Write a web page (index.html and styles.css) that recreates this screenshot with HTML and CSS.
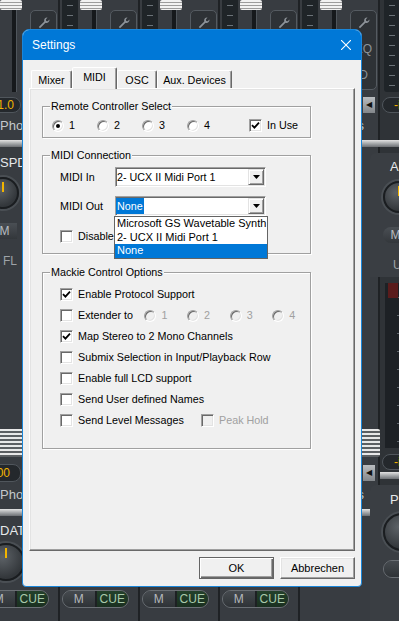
FILE: index.html
```html
<!DOCTYPE html>
<html lang="de">
<head>
    <meta charset="UTF-8">
    <meta name="viewport" content="width=device-width, initial-scale=1.0">
    <title>Settings</title>
    <link rel="stylesheet" href="styles.css">
</head>
<body>
    <div class="mixer">
        <div class="strip">
            <div class="s-top">
                <div class="meter"></div>
                <div class="fader"><div class="cap"></div></div>
                <div class="tool">
                    <svg class="wrench" width="14" height="14" viewBox="0 0 14 14"><path d="M10.5 1.5a3 3 0 0 0-3.2 4L1.8 11l1.2 1.2 5.5-5.5a3 3 0 0 0 4-3.2l-1.8 1.8-1.5-.4-.4-1.5z"/></svg>
                    <span>EQ</span><span>D</span>
                </div>
            </div>
            <div class="v-row"><div class="value">1.0</div><div class="arrow-btn">&#9664;</div></div>
            <div class="name">Phones</div>
            <div class="bar"></div>
            <div class="src">SPD</div>
            <div class="knob"></div>
            <div class="mbtn">M</div>
            <div class="ch">FL</div>
            <div class="lower"><div class="cap low"></div></div>
            <div class="v-row low"><div class="value v2">00</div><div class="arrow-btn">&#9664;</div></div>
            <div class="name">Phones</div>
            <div class="bar"></div>
            <div class="src low">DAT</div>
            <div class="knob big"></div>
            <div class="pill"><span>M</span><span class="cue">CUE</span></div>
        </div>
        <div class="strip">
            <div class="s-top">
                <div class="meter"></div>
                <div class="fader"><div class="cap"></div></div>
                <div class="tool">
                    <svg class="wrench" width="14" height="14" viewBox="0 0 14 14"><path d="M10.5 1.5a3 3 0 0 0-3.2 4L1.8 11l1.2 1.2 5.5-5.5a3 3 0 0 0 4-3.2l-1.8 1.8-1.5-.4-.4-1.5z"/></svg>
                    <span>EQ</span><span>D</span>
                </div>
            </div>
            <div class="v-row"><div class="value">1.0</div><div class="arrow-btn">&#9664;</div></div>
            <div class="name">Phones</div>
            <div class="bar"></div>
            <div class="src">SPD</div>
            <div class="knob"></div>
            <div class="mbtn">M</div>
            <div class="ch">FR</div>
            <div class="lower"><div class="cap low"></div></div>
            <div class="v-row low"><div class="value v2">00</div><div class="arrow-btn">&#9664;</div></div>
            <div class="name">Phones</div>
            <div class="bar"></div>
            <div class="src low">DAT</div>
            <div class="knob big"></div>
            <div class="pill"><span>M</span><span class="cue">CUE</span></div>
        </div>
        <div class="strip">
            <div class="s-top">
                <div class="meter"></div>
                <div class="fader"><div class="cap"></div></div>
                <div class="tool">
                    <svg class="wrench" width="14" height="14" viewBox="0 0 14 14"><path d="M10.5 1.5a3 3 0 0 0-3.2 4L1.8 11l1.2 1.2 5.5-5.5a3 3 0 0 0 4-3.2l-1.8 1.8-1.5-.4-.4-1.5z"/></svg>
                    <span>EQ</span><span>D</span>
                </div>
            </div>
            <div class="v-row"><div class="value">1.0</div><div class="arrow-btn">&#9664;</div></div>
            <div class="name">Phones</div>
            <div class="bar"></div>
            <div class="src">SPD</div>
            <div class="knob"></div>
            <div class="mbtn">M</div>
            <div class="ch">FL</div>
            <div class="lower"><div class="cap low"></div></div>
            <div class="v-row low"><div class="value v2">00</div><div class="arrow-btn">&#9664;</div></div>
            <div class="name">Phones</div>
            <div class="bar"></div>
            <div class="src low">DAT</div>
            <div class="knob big"></div>
            <div class="pill"><span>M</span><span class="cue">CUE</span></div>
        </div>
        <div class="strip">
            <div class="s-top">
                <div class="meter"></div>
                <div class="fader"><div class="cap"></div></div>
                <div class="tool">
                    <svg class="wrench" width="14" height="14" viewBox="0 0 14 14"><path d="M10.5 1.5a3 3 0 0 0-3.2 4L1.8 11l1.2 1.2 5.5-5.5a3 3 0 0 0 4-3.2l-1.8 1.8-1.5-.4-.4-1.5z"/></svg>
                    <span>EQ</span><span>D</span>
                </div>
            </div>
            <div class="v-row"><div class="value">1.0</div><div class="arrow-btn">&#9664;</div></div>
            <div class="name">Phones</div>
            <div class="bar"></div>
            <div class="src">SPD</div>
            <div class="knob"></div>
            <div class="mbtn">M</div>
            <div class="ch">FR</div>
            <div class="lower"><div class="cap low"></div></div>
            <div class="v-row low"><div class="value v2">00</div><div class="arrow-btn">&#9664;</div></div>
            <div class="name">Phones</div>
            <div class="bar"></div>
            <div class="src low">DAT</div>
            <div class="knob big"></div>
            <div class="pill"><span>M</span><span class="cue">CUE</span></div>
        </div>
        <div class="strip">
            <div class="s-top">
                <div class="meter"></div>
                <div class="fader"><div class="cap"></div></div>
                <div class="tool">
                    <svg class="wrench" width="14" height="14" viewBox="0 0 14 14"><path d="M10.5 1.5a3 3 0 0 0-3.2 4L1.8 11l1.2 1.2 5.5-5.5a3 3 0 0 0 4-3.2l-1.8 1.8-1.5-.4-.4-1.5z"/></svg>
                    <span>EQ</span><span>D</span>
                </div>
            </div>
            <div class="v-row"><div class="value">1.0</div><div class="arrow-btn">&#9664;</div></div>
            <div class="name">Phones</div>
            <div class="bar"></div>
            <div class="src">SPD</div>
            <div class="knob"></div>
            <div class="mbtn">M</div>
            <div class="ch">FL</div>
            <div class="lower"><div class="cap low"></div></div>
            <div class="v-row low"><div class="value v2">00</div><div class="arrow-btn">&#9664;</div></div>
            <div class="name">Phones</div>
            <div class="bar"></div>
            <div class="src low">DAT</div>
            <div class="knob big"></div>
        </div>
        <div class="out">
            <div class="s-top"><div class="meter"></div></div>
            <div class="v-row"><div class="value">-inf</div></div>
            <div class="name">Main</div>
            <div class="bar"></div>
            <div class="out-panel">
                <div class="src">AI</div>
                <div class="knob"></div>
                <div class="mbtn">M</div>
                <div class="ch">U</div>
            </div>
            <div class="out-meter"><div class="peak"></div></div>
            <div class="v-row low"><div class="value">-inf</div></div>
            <div class="bar"></div>
            <div class="out-panel low">
                <div class="src">Phones</div>
                <div class="knob big"></div>
                <div class="pill"><span>M</span></div>
            </div>
        </div>
    </div>

    <div class="dialog">
        <div class="titlebar">
            <span>Settings</span>
            <svg class="close" width="10" height="10" viewBox="0 0 10 10"><path d="M0 0L10 10M10 0L0 10" stroke="#fff" stroke-width="1.1"/></svg>
        </div>
        <div class="client">
            <div class="tabs">
                <div class="tab t-mixer">Mixer</div>
                <div class="tab t-midi active">MIDI</div>
                <div class="tab t-osc">OSC</div>
                <div class="tab t-aux">Aux. Devices</div>
            </div>
            <div class="panel">
                <div class="group g-remote">
                    <span class="group-title">Remote Controller Select</span>
                    <div class="radio-row">
                        <label class="opt"><span class="rb on"></span>1</label>
                        <label class="opt"><span class="rb"></span>2</label>
                        <label class="opt"><span class="rb"></span>3</label>
                        <label class="opt"><span class="rb"></span>4</label>
                        <label class="check in-use"><span class="cb on"><svg width="9" height="9" viewBox="0 0 9 9"><path d="M1 4.2L3.4 6.6L8 1.6" fill="none" stroke="#000" stroke-width="1.8"/></svg></span>In Use</label>
                    </div>
                </div>

                <div class="group g-conn">
                    <span class="group-title">MIDI Connection</span>
                    <div class="field">
                        <span class="field-label">MIDI In</span>
                        <div class="combo">
                            <span class="combo-text">2- UCX II Midi Port 1</span>
                            <span class="combo-btn"><svg width="7" height="4" viewBox="0 0 7 4"><path d="M0 0H7L3.5 4z"/></svg></span>
                        </div>
                    </div>
                    <div class="field second">
                        <span class="field-label">MIDI Out</span>
                        <div class="combo">
                            <span class="combo-text"><span class="sel">None</span></span>
                            <span class="combo-btn"><svg width="7" height="4" viewBox="0 0 7 4"><path d="M0 0H7L3.5 4z"/></svg></span>
                            <div class="list">
                                <div class="item">Microsoft GS Wavetable Synth</div>
                                <div class="item">2- UCX II Midi Port 1</div>
                                <div class="item hl">None</div>
                            </div>
                        </div>
                    </div>
                    <label class="check disable"><span class="cb"></span>Disable MIDI in background</label>
                </div>

                <div class="group g-mackie">
                    <span class="group-title">Mackie Control Options</span>
                    <label class="check row"><span class="cb on"><svg width="9" height="9" viewBox="0 0 9 9"><path d="M1 4.2L3.4 6.6L8 1.6" fill="none" stroke="#000" stroke-width="1.8"/></svg></span>Enable Protocol Support</label>
                    <div class="check row">
                        <span class="cb"></span><span class="ext-label">Extender to</span>
                        <span class="opt ext off"><span class="rb"></span>1</span>
                        <span class="opt ext off"><span class="rb"></span>2</span>
                        <span class="opt ext off"><span class="rb"></span>3</span>
                        <span class="opt ext off"><span class="rb"></span>4</span>
                    </div>
                    <label class="check row"><span class="cb on"><svg width="9" height="9" viewBox="0 0 9 9"><path d="M1 4.2L3.4 6.6L8 1.6" fill="none" stroke="#000" stroke-width="1.8"/></svg></span>Map Stereo to 2 Mono Channels</label>
                    <label class="check row"><span class="cb"></span>Submix Selection in Input/Playback Row</label>
                    <label class="check row"><span class="cb"></span>Enable full LCD support</label>
                    <label class="check row"><span class="cb"></span>Send User defined Names</label>
                    <div class="check row">
                        <span class="cb"></span><span class="level-label">Send Level Messages</span>
                        <span class="check off"><span class="cb"></span>Peak Hold</span>
                    </div>
                </div>
            </div>
            <div class="footer">
                <button class="btn default">OK</button>
                <button class="btn">Abbrechen</button>
            </div>
        </div>
    </div>
</body>
</html>
```

FILE: styles.css
```css
body {
    margin: 0;
    padding: 0;
    width: 399px;
    height: 621px;
    overflow: hidden;
    background-color: #25282c;
    font-family: "Liberation Sans", Arial, sans-serif;
}

/* mixer in the background */
.mixer {
    display: flex;
    margin-left: -20px;
    height: 621px;
    overflow: hidden;
}
.strip {
    flex: none;
    width: 80px;
    height: 621px;
    display: flex;
    flex-direction: column;
    background-color: #383c41;
    box-shadow: inset -2px 0 #1f2225;
}
.s-top {
    display: flex;
    height: 92px;
}
.meter {
    width: 16px;
    margin-left: 2px;
    background-color: #1f2428;
    background-image: repeating-linear-gradient(to bottom, transparent 0 5px, #6b7278 5px 6px, transparent 6px 10px);
    background-size: 6px 100%;
    background-position: center;
    background-repeat: no-repeat;
    border-radius: 0 0 3px 3px;
}
.fader {
    width: 22px;
    margin-left: 2px;
    background: linear-gradient(to right, transparent 12px, #16191c 12px 16px, #50565c 16px 17px, transparent 17px);
}
.cap {
    height: 10px;
    background: repeating-linear-gradient(to bottom, #f2f2f2 0 2px, #9c9c9c 2px 3px);
    border-radius: 2px;
}
.tool {
    display: flex;
    flex-direction: column;
    align-items: center;
    gap: 12px;
    width: 27px;
    height: 80px;
    margin: 10px 0 0 8px;
    box-sizing: border-box;
    padding-top: 5px;
    border: 1px solid #555b61;
    border-radius: 5px;
    background-color: #2e3236;
    color: #8d9399;
    font-size: 12px;
}
.wrench {
    fill: #8d9399;
}
.v-row {
    display: flex;
    align-items: center;
    margin-top: 5px;
    height: 16px;
}
.v-row.low {
    margin-top: 1px;
    height: 18px;
}
.value {
    width: 37px;
    height: 16px;
    margin-left: 4px;
    box-sizing: border-box;
    padding-right: 6px;
    border: 1px solid #50565c;
    border-radius: 8px;
    background-color: #24282c;
    color: #f2b400;
    font-size: 12px;
    line-height: 14px;
    text-align: right;
    white-space: nowrap;
    overflow: hidden;
}
.value.v2 {
    height: 18px;
    padding-right: 10px;
    line-height: 16px;
}
.arrow-btn {
    width: 12px;
    height: 16px;
    margin-left: 22px;
    background: linear-gradient(#b9bcbf, #83878b);
    color: #111;
    font-size: 8px;
    line-height: 16px;
    text-align: center;
}
.name {
    height: 26px;
    padding-left: 20px;
    color: #c4c8cc;
    font-size: 13px;
    line-height: 26px;
    white-space: nowrap;
}
.bar {
    height: 7px;
    margin-top: 1px;
    background: linear-gradient(#e3e3e3, #9a9da0 60%, #6d7074);
}
.src {
    height: 24px;
    margin-top: 4px;
    padding-left: 20px;
    color: #e6e8ea;
    font-size: 13px;
    line-height: 24px;
}
.src.low {
    height: 22px;
    line-height: 22px;
}
.knob {
    width: 32px;
    height: 32px;
    margin: 2px 0 0 7px;
    box-sizing: border-box;
    border: 2px solid #1a1d20;
    border-radius: 50%;
    background: radial-gradient(circle at 40% 35%, #5d6267, #33373b 70%);
    box-shadow: 0 0 0 2px #4a4f54;
    position: relative;
}
.knob::after {
    content: "";
    position: absolute;
    left: 50%;
    top: 3px;
    width: 2px;
    height: 10px;
    margin-left: -1px;
    background-color: #f2b400;
}
.knob.big {
    width: 38px;
    height: 38px;
    margin-top: 1px;
}
.mbtn {
    width: 25px;
    height: 16px;
    margin: 14px 0 0 12px;
    border-radius: 8px 0 0 8px;
    background: linear-gradient(#4a4f54, #33373b);
    color: #b8bcc0;
    font-size: 12px;
    line-height: 16px;
    text-align: center;
}
.ch {
    height: 24px;
    margin-top: 10px;
    padding-left: 23px;
    color: #9ea3a8;
    font-size: 12px;
    line-height: 24px;
}
.lower {
    display: flex;
    flex-direction: column;
    height: 190px;
    background: linear-gradient(to right, transparent 14px, #16191c 14px 18px, #555b61 18px 19px, transparent 19px);
}
.cap.low {
    height: 28px;
    margin: auto 0 6px 8px;
    background: repeating-linear-gradient(to bottom, #e8e8e8 0 2px, #5c5f62 2px 4px);
}
.pill {
    display: flex;
    width: 67px;
    height: 18px;
    margin: 9px 0 0 2px;
    box-sizing: border-box;
    border: 1px solid #6b7075;
    border-radius: 9px;
    overflow: hidden;
    font-size: 12px;
    line-height: 16px;
}
.pill span {
    flex: 1;
    text-align: center;
    background: linear-gradient(#454a4f, #2f3337);
    color: #b4b8bc;
}
.pill .cue {
    border-left: 2px solid #1d2023;
    background: linear-gradient(#23402a, #1a3020);
    color: #a8c8ab;
}

.out {
    flex: none;
    width: 60px;
    display: flex;
    flex-direction: column;
    background-color: #2f3337;
}
.out .meter {
    margin-left: 4px;
}
.out .value {
    margin-left: 2px;
    padding-right: 0;
    padding-left: 11px;
    text-align: left;
}
.out .v-row {
    margin-top: 5px;
}
.out-panel {
    margin: 6px 0 0 -10px;
    padding-top: 2px;
    border-radius: 6px 0 0 0;
    background-color: #3a3e43;
}
.out-panel .src {
    margin-top: 0;
    padding-left: 20px;
}
.out-panel .knob {
    margin-left: 13px;
}
.out-panel .mbtn {
    margin-left: 13px;
}
.out-meter {
    height: 165px;
    margin: 6px 0 0 5px;
    background-color: #1d2125;
    background-image: repeating-linear-gradient(to bottom, transparent 0 14px, #5e656b 14px 15px, transparent 15px 18px);
    background-size: 6px 100%;
    background-position: 12px 0;
    background-repeat: no-repeat;
}
.peak {
    width: 10px;
    height: 15px;
    margin-left: 3px;
    background-color: #5a1c1c;
}
.out-panel.low {
    flex: 1;
    margin-top: 6px;
    padding-top: 3px;
}
.out-panel .pill {
    margin-left: 13px;
}

/* settings dialog, lies over the mixer */
.dialog {
    position: absolute;
    left: 22px;
    top: 29px;
    width: 340px;
    height: 558px;
    box-sizing: border-box;
    border: 1px solid #1a86d9;
    border-radius: 7px 7px 4px 4px;
    background-color: #f0f0f0;
    overflow: hidden;
    font-size: 10.75px;
    color: #000;
}
.titlebar {
    display: flex;
    align-items: center;
    justify-content: space-between;
    height: 30px;
    padding: 0 10px 0 9px;
    background-color: #0078d7;
    color: #fff;
    font-size: 12px;
}
.client {
    padding: 7px 6px 0 6px;
}
.tabs {
    display: flex;
    align-items: flex-end;
    height: 21px;
    padding-left: 2px;
}
.tab {
    display: flex;
    align-items: center;
    justify-content: center;
    height: 18px;
    box-sizing: border-box;
    border: 1px solid;
    border-bottom: none;
    border-color: #fff #696969 transparent #fff;
    border-radius: 2px 2px 0 0;
    box-shadow: inset -1px 0 #a0a0a0;
    padding-top: 1px;
}
.t-mixer { width: 41px; }
.t-midi { width: 45px; }
.t-osc { width: 40px; }
.t-aux { width: 75px; }
.tab.active {
    position: relative;
    z-index: 1;
    height: 22px;
    margin-bottom: -1px;
    padding: 0 0 4px 0;
    background-color: #f0f0f0;
}
.panel {
    height: 463px;
    box-sizing: border-box;
    padding-top: 1px;
    border: 1px solid;
    border-color: #fff #696969 #696969 #fff;
    box-shadow: inset -1px -1px #a0a0a0, inset 1px 1px #e3e3e3;
}
.group {
    position: relative;
    width: 269px;
    margin: 16px 0 0 12px;
    box-sizing: border-box;
    border: 1px solid #a0a0a0;
    box-shadow: inset 1px 1px #fff, 1px 1px #fff;
}
.group-title {
    position: absolute;
    top: -7px;
    left: 7px;
    padding: 0 1px;
    background-color: #f0f0f0;
    line-height: 13px;
    white-space: nowrap;
}
.g-remote {
    height: 32px;
}
.g-conn {
    height: 99px;
    margin-top: 17px;
    padding: 11px 0 0 17px;
}
.g-mackie {
    height: 177px;
    margin-top: 18px;
    padding: 11px 0 0 17px;
}
.radio-row {
    display: flex;
    align-items: center;
    height: 13px;
    padding: 12px 0 0 9px;
}
.opt {
    display: flex;
    align-items: center;
    gap: 5px;
    width: 45px;
    line-height: 13px;
}
.rb {
    flex: none;
    width: 12px;
    height: 12px;
    box-sizing: border-box;
    border: 1px solid;
    border-color: #a0a0a0 #fff #fff #a0a0a0;
    border-radius: 50%;
    box-shadow: inset 1px 1px #696969, inset -1px -1px #e3e3e3;
    background-color: #fff;
    display: flex;
    align-items: center;
    justify-content: center;
}
.rb.on::after {
    content: "";
    width: 4px;
    height: 4px;
    border-radius: 50%;
    background-color: #000;
}
.check {
    display: flex;
    align-items: center;
    gap: 5px;
    line-height: 13px;
    white-space: nowrap;
}
.cb {
    flex: none;
    width: 13px;
    height: 13px;
    box-sizing: border-box;
    border: 1px solid;
    border-color: #a0a0a0 #fff #fff #a0a0a0;
    box-shadow: inset 1px 1px #696969, inset -1px -1px #e3e3e3;
    background-color: #fff;
    display: flex;
    align-items: center;
    justify-content: center;
}
.in-use {
    margin-left: 17px;
}
.field {
    display: flex;
    align-items: center;
    height: 20px;
}
.field.second {
    margin-top: 9px;
}
.field-label {
    width: 55px;
}
.combo {
    position: relative;
    display: flex;
    align-items: center;
    width: 151px;
    height: 20px;
    box-sizing: border-box;
    border: 1px solid;
    border-color: #a0a0a0 #fff #fff #a0a0a0;
    box-shadow: inset 1px 1px #696969, inset -1px -1px #e3e3e3;
    background-color: #fff;
}
.combo-text {
    padding-left: 1px;
    line-height: 14px;
}
.sel {
    display: inline-block;
    margin-left: -1px;
    padding: 1px;
    background-color: #0078d7;
    color: #fff;
}
.combo-btn {
    display: flex;
    align-items: center;
    justify-content: center;
    width: 16px;
    height: 16px;
    margin: 0 1px 0 auto;
    box-sizing: border-box;
    border: 1px solid;
    border-color: #e3e3e3 #696969 #696969 #e3e3e3;
    box-shadow: inset 1px 1px #fff, inset -1px -1px #a0a0a0;
    background-color: #f0f0f0;
}
.list {
    position: absolute;
    z-index: 2;
    top: calc(100% + 1px);
    left: -2px;
    width: 154px;
    box-sizing: border-box;
    border: 1px solid #646464;
    background-color: #fff;
}
.item {
    height: 13.5px;
    padding-left: 2px;
    font-size: 11px;
    line-height: 13.5px;
    white-space: nowrap;
}
.item.hl {
    background-color: #0078d7;
    color: #fff;
}
.disable {
    margin-top: 14px;
}
.row {
    height: 21px;
}
.ext-label {
    width: 62px;
}
.opt.ext {
    width: 38px;
}
.off {
    color: #a0a0a0;
}
.off .rb,
.off .cb {
    background-color: #f0f0f0;
}
.level-label {
    width: 118px;
}
.footer {
    display: flex;
    justify-content: flex-end;
    gap: 6px;
    margin-top: 6px;
}
.btn {
    width: 75px;
    height: 22px;
    box-sizing: border-box;
    border: 1px solid;
    border-color: #fff #696969 #696969 #fff;
    box-shadow: inset -1px -1px #a0a0a0, inset 1px 1px #e3e3e3;
    background-color: #f0f0f0;
    font-family: "Liberation Sans", Arial, sans-serif;
    font-size: 11px;
    color: #000;
    padding: 0;
}
.btn.default {
    border-color: #646464;
    box-shadow: inset 1px 1px #fff, inset -1px -1px #696969, inset -2px -2px #a0a0a0;
}
```
